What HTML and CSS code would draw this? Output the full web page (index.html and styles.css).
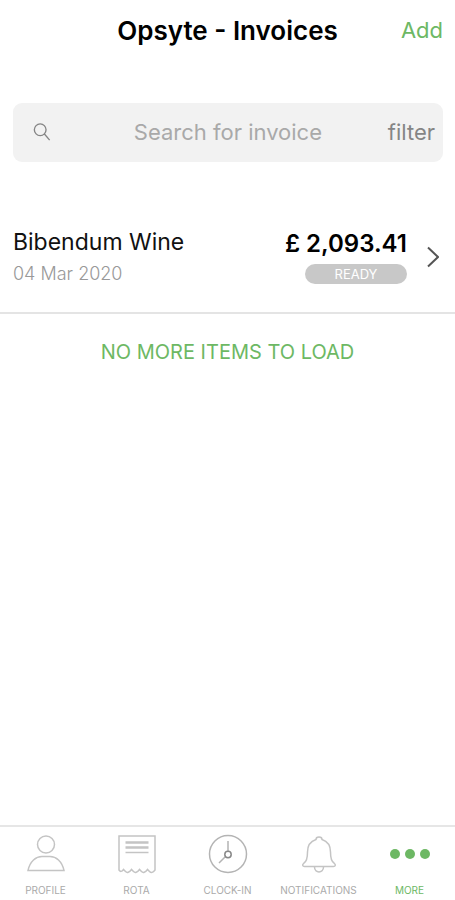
FILE: index.html
```html
<!DOCTYPE html>
<html lang="en">
<head>
<meta charset="utf-8">
<meta name="viewport" content="width=device-width, initial-scale=1">
<title>Opsyte - Invoices</title>
<link rel="stylesheet" href="styles.css">
</head>
<body>
<header class="topbar">
  <h1 class="title">Opsyte - Invoices</h1>
  <button class="add" type="button">Add</button>
</header>
<main class="content">
  <form class="search" role="search">
    <svg class="search-icon" viewBox="0 0 20 20" aria-hidden="true"><circle cx="8" cy="7.500" r="6.500"/><path d="M12.500 12 18.500 19"/></svg>
    <input class="search-input" type="search" placeholder="Search for invoice" aria-label="Search for invoice">
    <button class="filter" type="button">filter</button>
  </form>
  <ul class="invoices">
    <li>
      <a class="invoice" href="#">
        <span class="supplier">
          <span class="name">Bibendum Wine</span>
          <span class="date">04 Mar 2020</span>
        </span>
        <span class="summary">
          <span class="amount">£ 2,093.41</span>
          <span class="status">READY</span>
        </span>
        <svg class="chevron" viewBox="0 0 12 22" aria-hidden="true"><path d="M1 1.500 11 11 1 20.500"/></svg>
      </a>
    </li>
  </ul>
  <p class="end">NO MORE ITEMS TO LOAD</p>
</main>
<nav class="tabs">
  <a class="tab" href="#">
    <svg class="tab-icon" viewBox="0 0 40 40" aria-hidden="true"><circle cx="20" cy="10.500" r="8.500"/><path d="M2 36.500C4 27 10 22.500 16 22.500h8C30 22.500 36 27 38 36.500Z"/></svg>
    <span>PROFILE</span>
  </a>
  <a class="tab" href="#">
    <svg class="tab-icon" viewBox="0 0 40 40" aria-hidden="true"><path d="M2 36V2H38V36Q35 40 32.500 37.500L30.500 35.500Q27 40 24.500 37.500L22.500 35.500Q19 40 16.500 37.500L14.500 35.500Q11 40 8.500 37.500L6.500 35.500Q4 39 2 36Z"/><path class="bold" d="M8.500 8.500h23M8.500 13.500h23"/><path d="M8.500 18.500h23"/></svg>
    <span>ROTA</span>
  </a>
  <a class="tab" href="#">
    <svg class="tab-icon clock" viewBox="0 0 40 40" aria-hidden="true"><circle cx="20" cy="20" r="18.500"/><path d="M20 7v10M17 23l-6 6"/><circle class="hub" cx="20" cy="20.500" r="3.200"/></svg>
    <span>CLOCK-IN</span>
  </a>
  <a class="tab" href="#">
    <svg class="tab-icon" viewBox="0 0 40 40" aria-hidden="true"><path d="M17 5.500C17 2.200 23 2.200 23 5.500 29 7.500 31.500 12 31.500 18 31.500 24.500 32.500 27.500 35 29 37.500 31 36 32.500 34.500 32.500H5.500C4 32.500 2.500 31 5 29 7.500 27.500 8.500 24.500 8.500 18 8.500 12 11 7.500 17 5.500Z"/><path d="M15.500 33C15.500 39.500 24.500 39.500 24.500 33"/></svg>
    <span>NOTIFICATIONS</span>
  </a>
  <a class="tab active" href="#" aria-current="page">
    <svg class="tab-icon" viewBox="0 0 40 40" aria-hidden="true"><circle cx="5" cy="20" r="5"/><circle cx="20" cy="20" r="5"/><circle cx="35" cy="20" r="5"/></svg>
    <span>MORE</span>
  </a>
</nav>
</body>
</html>
```
FILE: styles.css
```css
* {
  box-sizing: border-box;
}

body {
  margin: 0;
  min-height: 100vh;
  display: flex;
  flex-direction: column;
  background: #fff;
  color: #111;
  font-family: Inter, "Liberation Sans", sans-serif;
}

a {
  color: inherit;
  text-decoration: none;
}

button,
input {
  font: inherit;
  border: 0;
  padding: 0;
  background: none;
}

svg {
  fill: none;
  stroke: currentColor;
}

.topbar {
  display: grid;
  grid-template-columns: 1fr auto 1fr;
  align-items: center;
  height: 60px;
  padding: 0 12px;
}

.title {
  grid-column: 2;
  margin: 0;
  font-size: 26px;
  font-weight: 600;
  color: #000;
}

.add {
  justify-self: end;
  font-size: 22px;
  color: #6db864;
}

.content {
  flex: 1;
  padding-top: 43px;
}

.search {
  display: flex;
  align-items: center;
  height: 59px;
  margin: 0 12px 0 13px;
  padding: 0 8px 2px 20px;
  border-radius: 9px;
  background: #f2f2f2;
}

.search-icon {
  width: 18px;
  height: 18px;
  color: #858585;
  stroke-width: 1.500;
}

.search-input {
  flex: 1;
  min-width: 0;
  margin-left: 36px;
  text-align: center;
  font-size: 22px;
  outline: 0;
}

.search-input::placeholder {
  color: #a9a9a9;
  opacity: 1;
}

.filter {
  font-size: 22px;
  color: #858585;
}

.invoices {
  list-style: none;
  margin: 0;
  padding: 50px 0 0;
}

.invoice {
  display: flex;
  align-items: center;
  height: 102px;
  padding: 0 16px 11px 13px;
  border-bottom: 2px solid #e4e4e4;
}

.supplier,
.summary {
  display: flex;
  flex-direction: column;
}

.supplier {
  flex: 1;
  gap: 6px;
}

.name {
  font-size: 23px;
  line-height: 28px;
}

.date {
  font-size: 18px;
  line-height: 24px;
  font-weight: 300;
  color: #999;
}

.summary {
  align-items: flex-end;
  gap: 6px;
}

.amount {
  font-size: 24px;
  line-height: 28px;
  font-weight: 600;
  color: #000;
}

.status {
  width: 102px;
  border-radius: 10px;
  background: #c8c8c8;
  color: #fff;
  font-size: 13px;
  line-height: 20px;
  text-align: center;
}

.chevron {
  width: 12px;
  height: 22px;
  margin-left: 20px;
  color: #555;
  stroke-width: 2;
}

.end {
  margin: 24px 0;
  font-size: 20px;
  line-height: 28px;
  text-align: center;
  color: #6db864;
}

.tabs {
  display: grid;
  grid-template-columns: repeat(5, 1fr);
  height: 75px;
  border-top: 2px solid #e6e6e6;
}

.tab {
  display: flex;
  flex-direction: column;
  align-items: center;
  gap: 9px;
  padding-top: 7px;
  font-size: 10px;
  line-height: 14px;
  color: #aaa;
}

.tab-icon {
  width: 40px;
  height: 40px;
  color: #c4c4c4;
  stroke-width: 1.500;
}

.clock {
  color: #b4b4b4;
}

.hub {
  stroke: #888;
}

.bold {
  stroke-width: 2.500;
}

.active,
.active .tab-icon {
  color: #6db864;
}

.active .tab-icon {
  fill: currentColor;
  stroke: none;
}
```
